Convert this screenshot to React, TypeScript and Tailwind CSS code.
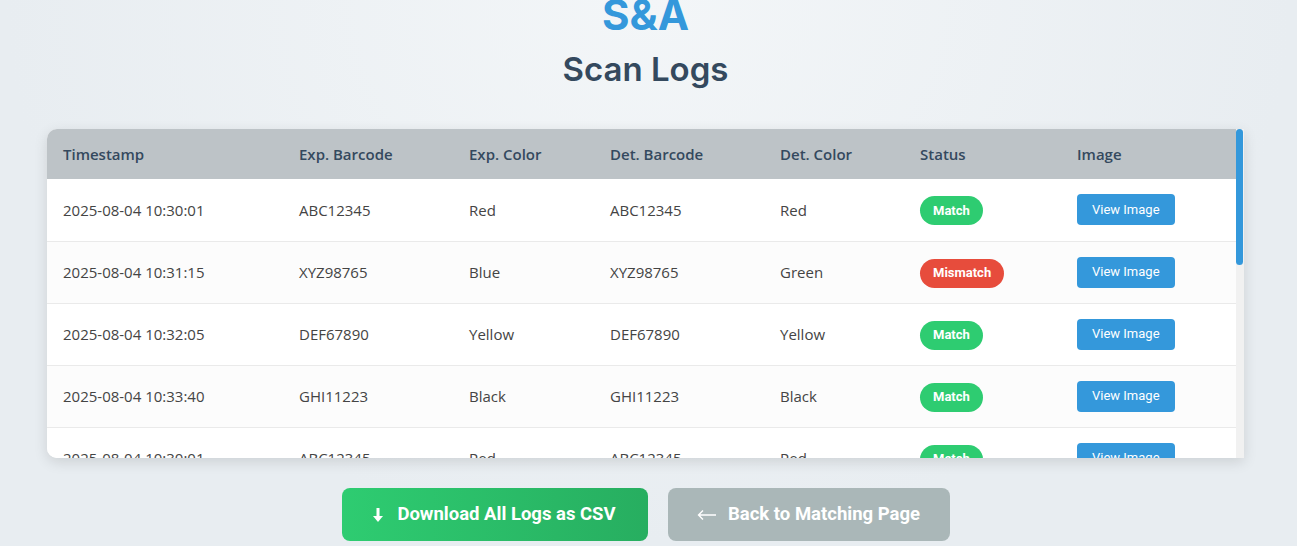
import React from 'react';

type Log = {
  ts: string;
  expBarcode: string;
  expColor: string;
  detBarcode: string;
  detColor: string;
  match: boolean;
};

const base: Log[] = [
  { ts: '2025-08-04 10:30:01', expBarcode: 'ABC12345', expColor: 'Red', detBarcode: 'ABC12345', detColor: 'Red', match: true },
  { ts: '2025-08-04 10:31:15', expBarcode: 'XYZ98765', expColor: 'Blue', detBarcode: 'XYZ98765', detColor: 'Green', match: false },
  { ts: '2025-08-04 10:32:05', expBarcode: 'DEF67890', expColor: 'Yellow', detBarcode: 'DEF67890', detColor: 'Yellow', match: true },
  { ts: '2025-08-04 10:33:40', expBarcode: 'GHI11223', expColor: 'Black', detBarcode: 'GHI11223', detColor: 'Black', match: true },
];

const logs: Log[] = [...base, ...base, ...base];

const cols = ['Timestamp', 'Exp. Barcode', 'Exp. Color', 'Det. Barcode', 'Det. Color', 'Status', 'Image'];
const widths = [236, 170, 141, 170, 140, 157, 175];

const StatusBadge = ({ match }: { match: boolean }) => (
  <span
    className={`inline-flex items-center h-[29px] px-[13px] rounded-full text-[13px] font-bold text-white ${
      match ? 'bg-[#2ecc71]' : 'bg-[#e74c3c]'
    }`}
    style={{ fontFamily: 'Roboto, sans-serif' }}
  >
    {match ? 'Match' : 'Mismatch'}
  </span>
);

export default function App() {
  return (
    <div className="min-h-[546px] w-full bg-[radial-gradient(ellipse_at_50%_0%,#f3f6f8_0%,#e8edf1_70%)] overflow-hidden">
      <div className="w-[1291px] flex flex-col items-center">
        <h1
          className="text-[42px] leading-none font-bold text-[#3498db] mt-[-6px]"
          style={{ fontFamily: 'Inter, sans-serif' }}
        >
          S&amp;A
        </h1>
        <h2
          className="mt-[17px] text-[33px] leading-none font-semibold text-[#34495e]"
          style={{ fontFamily: 'Inter, sans-serif' }}
        >
          Scan Logs
        </h2>

        <div className="mt-[43px] w-[1197px] h-[329px] flex rounded-l-[10px] bg-white shadow-[0_4px_14px_rgba(0,0,0,0.12)] overflow-hidden">
          <div className="w-[1189px] overflow-hidden">
            <table
              className="w-full table-fixed border-collapse text-[15px] text-[#444]"
              style={{ fontFamily: '"Open Sans", sans-serif' }}
            >
              <colgroup>
                {widths.map((w, i) => (
                  <col key={i} style={{ width: w }} />
                ))}
              </colgroup>
              <thead>
                <tr className="h-[50px] bg-[#bdc3c7]">
                  {cols.map((c) => (
                    <th key={c} className="px-4 text-left font-semibold text-[#34495e]">
                      {c}
                    </th>
                  ))}
                </tr>
              </thead>
              <tbody>
                {logs.map((l, i) => (
                  <tr key={i} className={`h-[62px] border-b border-[#eaeaea] ${i % 2 === 1 ? 'bg-[#fcfcfc]' : 'bg-white'}`}>
                    <td className="px-4 pt-[1px]">{l.ts}</td>
                    <td className="px-4 pt-[1px]">{l.expBarcode}</td>
                    <td className="px-4 pt-[1px]">{l.expColor}</td>
                    <td className="px-4 pt-[1px]">{l.detBarcode}</td>
                    <td className="px-4 pt-[1px]">{l.detColor}</td>
                    <td className="px-4 pt-[2px]">
                      <StatusBadge match={l.match} />
                    </td>
                    <td className="px-4">
                      <button
                        className="h-[31px] px-[15px] rounded-[4px] bg-[#3498db] text-white text-[13px]"
                        style={{ fontFamily: 'Roboto, sans-serif' }}
                      >
                        View Image
                      </button>
                    </td>
                  </tr>
                ))}
              </tbody>
            </table>
          </div>
          {/* scrollbar */}
          <div className="w-[8px] bg-[#f1f1f1] flex flex-col">
            <div className="h-[136px] w-[7px] rounded-full bg-[#3498db]" />
          </div>
        </div>

        <div className="mt-[30px] flex gap-5" style={{ fontFamily: 'Roboto, sans-serif' }}>
          <button className="h-[53px] w-[306px] rounded-lg bg-gradient-to-r from-[#2ecc71] to-[#27ae60] text-white text-[18.5px] font-bold flex items-center justify-center gap-[14px]">
            <svg width="10" height="14" viewBox="0 0 10 14" fill="white">
              <rect x="3.5" y="0" width="3" height="9" />
              <path d="M0 8h10l-5 6z" />
            </svg>
            Download All Logs as CSV
          </button>
          <button className="h-[53px] w-[282px] rounded-lg bg-[#aab7b8] text-white text-[18.5px] font-bold flex items-center justify-center gap-[11px]">
            <svg width="20" height="12" viewBox="0 0 20 12" fill="none" stroke="white" strokeWidth="1.4">
              <path d="M19 6H2M6 1.5L1.5 6 6 10.5" />
            </svg>
            Back to Matching Page
          </button>
        </div>
      </div>
    </div>
  );
}
